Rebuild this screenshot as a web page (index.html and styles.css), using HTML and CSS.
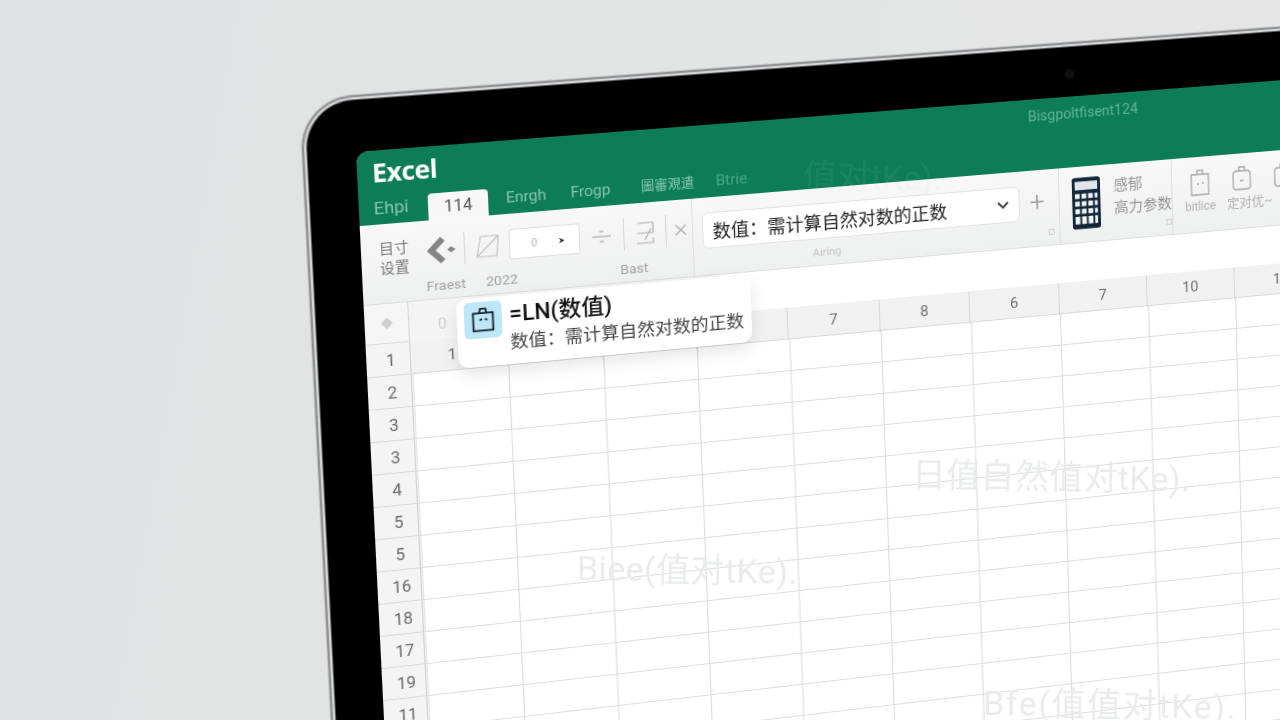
FILE: index.html
```html
<!DOCTYPE html>
<html>
<head>
  <title>Excel LN</title>
  <link rel="stylesheet" href="styles.css">
</head>
<body>
  <!-- Laptop, drawn flat and tilted with one transform -->
  <div class="laptop">
    <div class="bezel"></div>
    <div class="camera"></div>
    <div class="screen">

      <div class="titlebar">
        <div class="app-name">Excel</div>
        <div class="doc-name">Bisgpoltfisent124</div>
      </div>
      <div class="tabs">
        <span class="tab tab-first">Ehpi</span>
        <span class="tab tab-active">114</span>
        <span class="tab tab-enrgh">Enrgh</span>
        <span class="tab tab-frogp">Frogp</span>
        <span class="tab tab-cjk">圖審覌遣</span>
        <span class="tab tab-btrie">Btrie</span>
      </div>

      <div class="ribbon">
        <div class="group group-tools">
          <div class="tool-row">
            <div class="two-line">目寸<br>设置</div>
            <svg class="arrow-icon" viewBox="-7 2 36 26"><path d="M17 4 L6 15 L17 26" fill="none" stroke="#858585" stroke-width="6"/><path d="M25 12 L29 15 L25 18 L21 15 Z" fill="#858585"/></svg>
            <div class="sep"></div>
            <svg class="tool-icon" viewBox="0 0 26 26"><path d="M7 3 H24 L22 23 H3 Z M4 22 L23 4" fill="none" stroke="#c2c2c2" stroke-width="1.1"/></svg>
            <div class="mini-input"><span>0</span><svg viewBox="0 0 10 10"><path d="M2 2 L8 5 L2 8 L4 5 Z" fill="#222"/></svg></div>
            <svg class="tool-icon" viewBox="0 0 26 26"><path d="M4 13 H22" stroke="#b5b5b5" stroke-width="1.4"/><path d="M11 8 H15 M11 18 H15" stroke="#c5c5c5" stroke-width="2"/></svg>
            <div class="sep"></div>
            <svg class="tool-icon tool-narrow" viewBox="0 0 24 26"><path d="M5 3 H20 V13 M5 13 H20 M12 20 L18 9 M4 23 H20 V18" fill="none" stroke="#b0b0b0" stroke-width="1.2"/></svg>
            <div class="sep"></div>
            <svg class="close-icon" viewBox="0 0 12 12"><path d="M1 1 L11 11 M11 1 L1 11" stroke="#aaa" stroke-width="1.2"/></svg>
          </div>
          <div class="captions">
            <span>Fraest</span>
            <span>2022</span>
            <span class="caption-end">Bast</span>
          </div>
        </div>

        <div class="group group-hint">
          <div class="hint-row">
            <div class="dropdown">
              <span>数值：需计算自然对数的正数</span>
              <svg viewBox="0 0 12 8"><path d="M1 1 L6 6 L11 1" fill="none" stroke="#444" stroke-width="2"/></svg>
            </div>
            <span class="plus">+</span>
          </div>
          <div class="hint-caption">Airing</div>
          <div class="launcher"></div>
        </div>

        <div class="group group-calc">
          <svg class="calc" viewBox="0 0 32 56">
            <rect x="1" y="1" width="30" height="54" rx="3" fill="#12263a"/>
            <rect x="4" y="5" width="24" height="9" fill="#dfe5e8"/>
            <path d="M4 18 H9 V23 H4 Z M11 18 H16 V23 H11 Z M18 18 H23 V23 H18 Z M25 18 H28 V23 H25 Z M4 26 H9 V31 H4 Z M11 26 H16 V31 H11 Z M18 26 H23 V31 H18 Z M25 26 H28 V31 H25 Z M4 34 H9 V39 H4 Z M11 34 H16 V39 H11 Z M18 34 H23 V39 H18 Z M25 34 H28 V39 H25 Z M4 42 H9 V50 H4 Z M11 42 H16 V50 H11 Z M18 42 H23 V50 H18 Z M25 42 H28 V50 H25 Z" fill="#f2f4f4"/>
          </svg>
          <div class="calc-labels">
            <div>感郁</div>
            <div>高力参数</div>
          </div>
          <div class="launcher launcher-calc"></div>
        </div>

        <div class="group group-clips">
          <div class="clip clip-small">
            <svg viewBox="0 0 22 30"><path d="M2 7 H20 V28 H2 Z M8 7 V3 H14 V7 M8 17 H10 M13 16 H15" fill="none" stroke="#a5a5a5" stroke-width="1.3"/></svg>
            <span>bitlice</span>
          </div>
          <div class="clip clip-wide">
            <svg viewBox="0 0 22 30"><path d="M4 7 H18 L20 9 V24 L18 26 H4 L2 24 V9 Z M8 7 V3 H14 V7 M9 17 H13" fill="none" stroke="#a5a5a5" stroke-width="1.3"/></svg>
            <span>定对优~</span>
          </div>
          <div class="clip">
            <svg viewBox="0 0 22 30"><path d="M4 7 H18 L20 9 V24 L18 26 H4 L2 24 V9 Z M8 7 V3 H14 V7" fill="none" stroke="#a5a5a5" stroke-width="1.3"/></svg>
          </div>
        </div>
      </div>

      <div class="sheet">
        <div class="corner"><span class="diamond"></span></div>
        <div class="top-strip"><span>0</span></div>

        <div class="row-heads">
          <div>1</div><div>2</div><div>3</div><div>3</div><div>4</div><div>5</div>
          <div>5</div><div>16</div><div>18</div><div>17</div><div>19</div><div>11</div>
          <div></div><div></div><div></div><div></div><div></div><div></div>
        </div>

        <div class="cells">
          <div class="col-heads">
            <div class="col-first">1</div><div></div><div></div><div></div><div>7</div><div>8</div>
            <div>6</div><div>7</div><div>10</div><div>1</div><div></div><div></div>
          </div>
        </div>
      </div>

      <!-- Formula hint card -->
      <div class="hint-card">
        <div class="hint-tile">
          <svg viewBox="0 0 28 30"><path d="M3 7 H25 V27 H3 Z M10 7 L11 2 H17 L18 7 M10 15 L13 14 M16 14 L19 15" fill="none" stroke="#15202b" stroke-width="2"/></svg>
        </div>
        <div class="hint-text">
          <div class="hint-formula">=LN(数值)</div>
          <div class="hint-desc">数值：需计算自然对数的正数</div>
        </div>
      </div>
    </div>
  </div>

  <!-- Faint ghost text laid over the whole picture -->
  <div class="ghost ghost-green">值对tKe).</div>
  <div class="ghost ghost-a">日值自然值对tKe).</div>
  <div class="ghost ghost-b">Biee(值对tKe).</div>
  <div class="ghost ghost-c">Bfe(值值对tKe).</div>
</body>
</html>
```

FILE: styles.css
```css
html, body {
  margin: 0;
  height: 100%;
  overflow: hidden;
}

body {
  position: relative;
  width: 1280px;
  height: 720px;
  font-family: Roboto, "Noto Sans CJK SC", sans-serif;
  background: linear-gradient(100deg, #e0e1e2 0%, #e3e4e4 50%, #e6e6e6 100%);
}

/* flat coordinates map to the photo through this one matrix */
.laptop {
  position: absolute;
  left: 0;
  top: 0;
  width: 1200px;
  height: 800px;
  transform-origin: 0 0;
  transform: matrix3d(1.0952, -0.07247, 0, 0.00006996, 0.06143, 1.03583, 0, 0.00002961, 0, 0, 1, 0, 356, 152, 0, 1);
  filter: blur(0.45px);
}

.bezel {
  position: absolute;
  left: -45px;
  top: -50px;
  width: 1300px;
  height: 900px;
  background: #000;
  border-radius: 44px 44px 0 0;
  box-shadow: 0 0 0 1px #5c5c5e, 0 0 0 3px #d4d5d7, 0 0 0 5px #909294, 0 0 0 6px #c9cacc;
}

.camera {
  position: absolute;
  left: 695px;
  top: -28px;
  width: 10px;
  height: 10px;
  border-radius: 50%;
  background: #101010;
}

.screen {
  position: relative;
  width: 1200px;
  height: 800px;
  background: #fff;
  border-radius: 12px 12px 0 0;
  overflow: hidden;
}

.titlebar {
  height: 46px;
  display: flex;
  align-items: flex-start;
  background: #0d7d58;
}

.app-name {
  width: 642px;
  padding: 4px 0 0 14px;
  font-size: 25px;
  line-height: 34px;
  font-weight: 700;
  letter-spacing: -0.5px;
  color: #fff;
  font-family: "Open Sans", sans-serif;
}

.doc-name {
  padding-top: 10px;
  font-size: 14.5px;
  line-height: 16px;
  color: #62b395;
}

.tabs {
  height: 26px;
  display: flex;
  padding-left: 14px;
  background: #0d7d58;
}

.tab {
  font-size: 15px;
  line-height: 20px;
  color: #86c6ac;
}

.tab-first {
  width: 51px;
  font-size: 17px;
}

.tab-active {
  width: 57px;
  background: #f7f7f7;
  border-radius: 4px 4px 0 0;
  color: #555;
  text-align: center;
  line-height: 28px;
  font-size: 16px;
}

.tab-enrgh {
  margin-left: 17px;
  width: 62px;
}

.tab-frogp {
  width: 68px;
}

.tab-cjk {
  font-size: 13px;
  width: 73px;
}

.tab-btrie {
  font-size: 15px;
  color: #4aa483;
}

.ribbon {
  height: 78px;
  display: flex;
  background: linear-gradient(180deg, #f8f8f8, #eeefef);
  border-bottom: 1px solid #dcdddd;
  box-sizing: border-box;
}

.group {
  position: relative;
  box-sizing: border-box;
  border-right: 1px solid #dedede;
}

.group-tools {
  width: 318px;
  padding: 11px 0 0 17px;
}

.tool-row {
  display: flex;
  align-items: center;
  gap: 8px;
  height: 38px;
}

.two-line {
  width: 28px;
  padding-top: 7px;
  font-size: 14px;
  line-height: 19px;
  color: #777;
}

.arrow-icon {
  width: 36px;
  height: 30px;
}

.sep {
  width: 1px;
  height: 32px;
  background: #d6d6d6;
}

.tool-icon {
  width: 26px;
  height: 26px;
}

.tool-narrow {
  width: 24px;
}

.close-icon {
  width: 12px;
  height: 12px;
}

.mini-input {
  width: 68px;
  height: 30px;
  box-sizing: border-box;
  display: flex;
  align-items: center;
  justify-content: space-between;
  padding: 0 12px 0 20px;
  background: #fff;
  border: 1px solid #dfdfdf;
  border-radius: 2px;
  font-size: 11px;
  color: #bbb;
}

.mini-input svg {
  width: 9px;
  height: 9px;
}

.captions {
  display: flex;
  gap: 19px;
  margin-top: 6px;
  padding-left: 43px;
  font-size: 13.5px;
  line-height: 18px;
  color: #a2a2a2;
}

.caption-end {
  margin-left: 80px;
}

.group-hint {
  width: 368px;
  padding: 15px 0 0 9px;
}

.hint-row {
  display: flex;
  align-items: center;
}

.dropdown {
  width: 318px;
  height: 36px;
  box-sizing: border-box;
  display: flex;
  align-items: center;
  justify-content: space-between;
  padding: 0 10px 0 9px;
  background: #fff;
  border: 1px solid #e2e2e2;
  border-radius: 6px;
  font-size: 18px;
  color: #222;
}

.dropdown svg {
  width: 12px;
  height: 8px;
}

.plus {
  margin-left: 10px;
  font-size: 28px;
  line-height: 28px;
  font-weight: 300;
  color: #9b9b9b;
}

.hint-caption {
  margin-top: 7px;
  padding-left: 108px;
  font-size: 11px;
  line-height: 14px;
  color: #c4c4c4;
}

.launcher {
  position: absolute;
  right: 5px;
  bottom: 10px;
  width: 4px;
  height: 4px;
  border: 1px solid #cfcfcf;
}

.launcher-calc {
  right: 0;
}

.group-calc {
  width: 117px;
  display: flex;
  align-items: flex-start;
  gap: 13px;
  padding: 10px 0 0 12px;
}

.calc {
  width: 31px;
  height: 55px;
  flex: none;
}

.calc-labels {
  font-size: 15px;
  line-height: 23px;
  color: #949494;
  white-space: nowrap;
  padding-top: 1px;
  margin-right: -6px;
}

.group-clips {
  flex: 1;
  display: flex;
  gap: 12px;
  padding: 11px 0 0 13px;
  border-right: 0;
}

.clip {
  width: 32px;
  display: flex;
  flex-direction: column;
  align-items: center;
  font-size: 12px;
  line-height: 16px;
  color: #b0b0b0;
  white-space: nowrap;
}

.clip svg {
  width: 22px;
  height: 30px;
  margin-bottom: 2px;
}

.clip-wide span {
  padding-left: 16px;
  font-size: 13px;
}

.sheet {
  display: grid;
  grid-template-columns: 42px 1fr;
  grid-template-rows: 39px auto;
}

.corner {
  display: flex;
  align-items: center;
  justify-content: center;
  background: #f5f5f5;
  border-right: 1px solid #d6d7d8;
  border-bottom: 1px solid #dcdcdc;
  box-sizing: border-box;
}

.diamond {
  width: 8px;
  height: 8px;
  background: #cfcfcf;
  transform: rotate(45deg);
}

.top-strip {
  padding: 14px 0 0 27px;
  font-size: 15px;
  line-height: 20px;
  color: #cfcfcf;
  background: linear-gradient(90deg, #f4f4f4 0, #f4f4f4 300px, #fff 300px);
}

.row-heads div {
  height: 32px;
  box-sizing: border-box;
  padding-left: 5px;
  background: #f4f4f5;
  border-right: 1px solid #cfd0d2;
  border-bottom: 1px solid #d9dadb;
  text-align: center;
  font-size: 16px;
  line-height: 33px;
  color: #6a6a6a;
}

.cells {
  height: 576px;
  background-color: #fff;
  background-image:
    linear-gradient(#dcdde0 1px, transparent 1px),
    linear-gradient(90deg, #d6d7da 1px, transparent 1px);
  background-size: 100% 32px, 91.5px 100%;
  background-position: 0 -1px, 0.6px 0;
}

.col-heads {
  height: 32px;
  display: grid;
  grid-template-columns: repeat(12, 91.5px);
  background: #f1f1f2;
  border-bottom: 1px solid #d8d9da;
  box-sizing: border-box;
}

.col-heads div {
  border-right: 1px solid #d6d7d8;
  text-align: center;
  font-size: 15px;
  line-height: 33px;
  color: #6e6e6e;
}

.col-heads .col-first {
  padding-right: 12px;
}

.hint-card {
  position: absolute;
  left: 87px;
  top: 152px;
  width: 285px;
  height: 68px;
  box-sizing: border-box;
  display: flex;
  gap: 7px;
  padding: 4px 0 0 7px;
  background: #fff;
  border-radius: 10px;
  box-shadow: 0 7px 16px rgba(0, 0, 0, 0.1);
}

.hint-tile {
  width: 36px;
  height: 36px;
  flex: none;
  display: flex;
  align-items: center;
  justify-content: center;
  background: #bde7f6;
  border-radius: 5px;
}

.hint-tile svg {
  width: 24px;
  height: 26px;
}

.hint-formula {
  font-size: 22px;
  line-height: 30px;
  font-weight: 500;
  color: #111;
  white-space: nowrap;
}

.hint-desc {
  font-size: 17.5px;
  line-height: 25px;
  color: #444;
  white-space: nowrap;
}

.ghost {
  position: absolute;
  font-size: 34px;
  line-height: 40px;
  color: #e9ebed;
  white-space: nowrap;
  transform: rotate(1deg);
  filter: blur(0.6px);
}

.ghost-green {
  left: 803px;
  top: 157px;
  color: rgba(190, 200, 195, 0.08);
}

.ghost-a {
  left: 912px;
  top: 457px;
  letter-spacing: 0.3px;
}

.ghost-b {
  left: 577px;
  top: 550px;
  letter-spacing: 0.4px;
}

.ghost-c {
  left: 983px;
  top: 685px;
  letter-spacing: 1.6px;
}
```
